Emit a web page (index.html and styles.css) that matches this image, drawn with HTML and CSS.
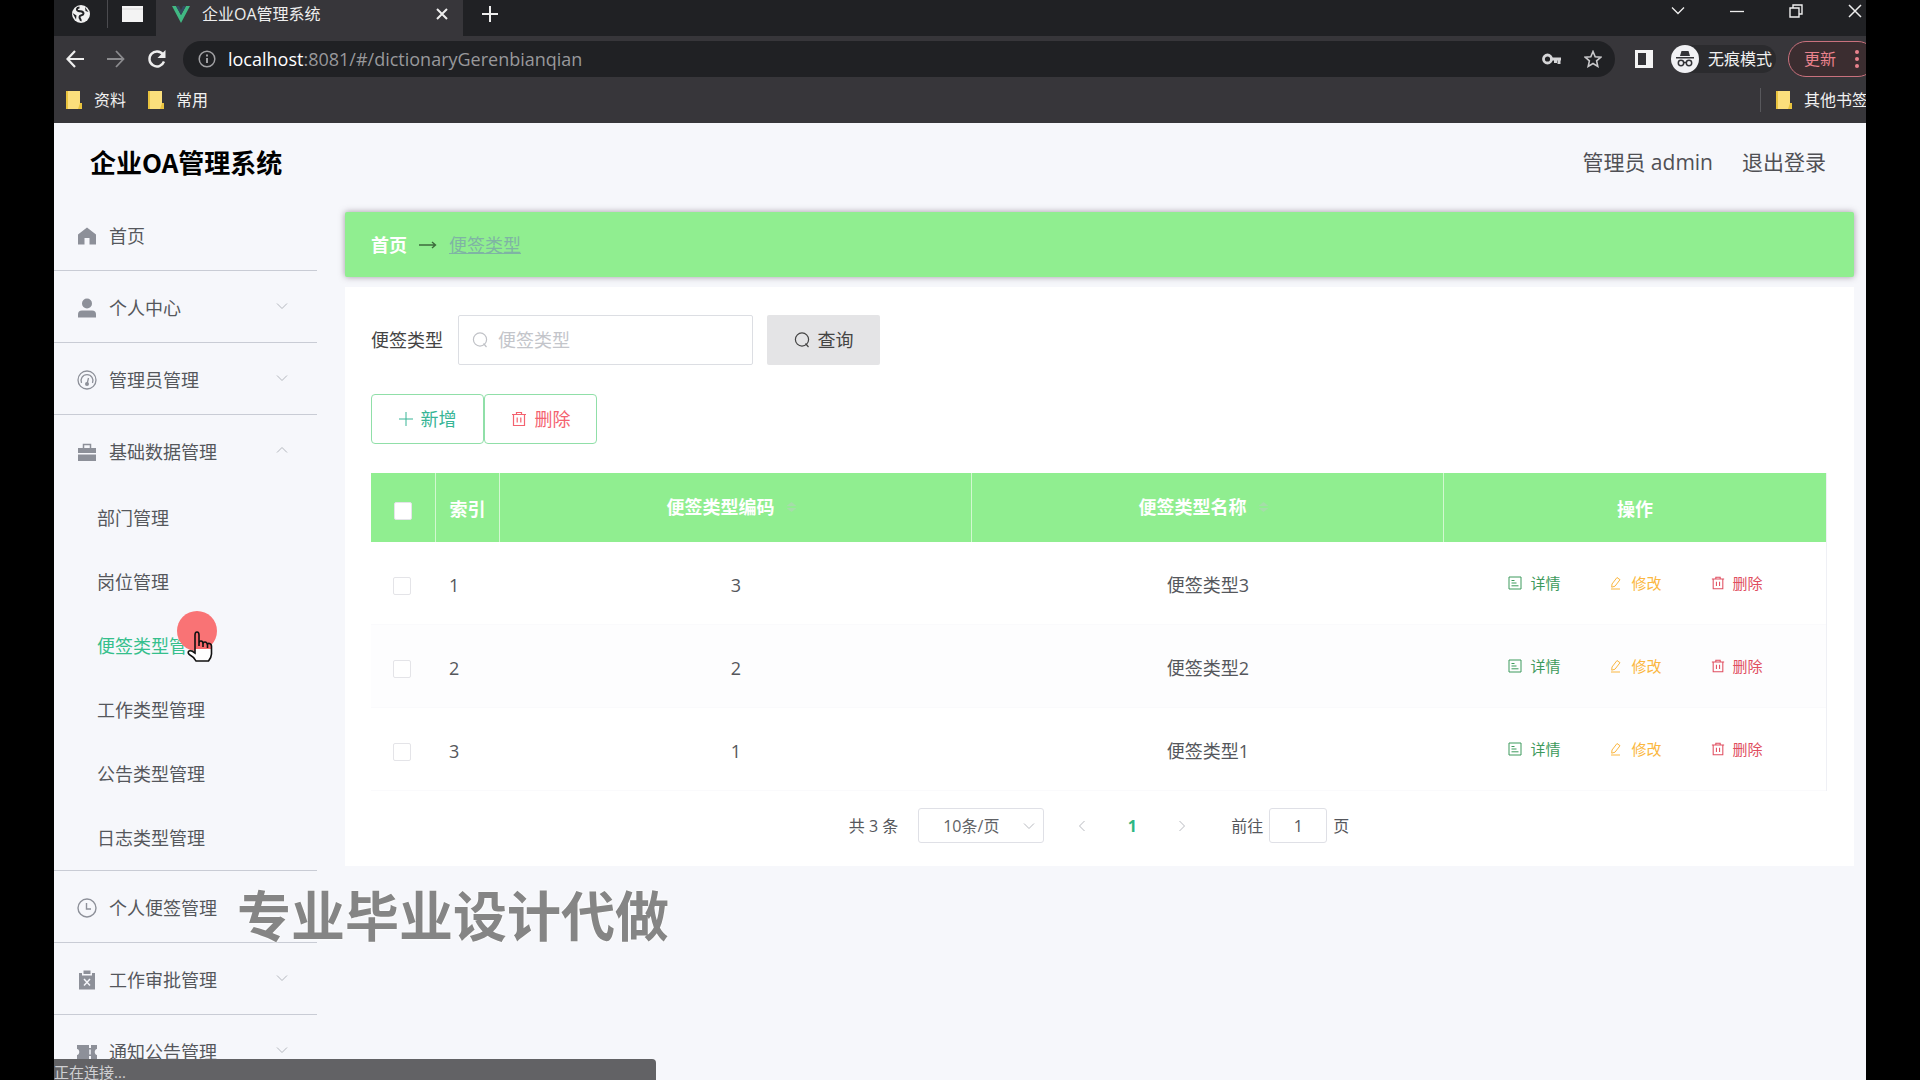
FILE: index.html
```html
<!DOCTYPE html>
<html lang="zh-CN">
<head>
<meta charset="utf-8">
<title>企业OA管理系统</title>
<link rel="stylesheet" href="styles.css">
</head>
<body>
<svg class="defs" aria-hidden="true">
  <symbol id="down" viewBox="0 0 14 14"><path d="M2 4.5l5 5 5-5" fill="none" stroke="currentColor"/></symbol>
  <symbol id="search" viewBox="0 0 16 16"><circle cx="8" cy="7.500" r="6.600" fill="none" stroke="currentColor" stroke-width="1.200"/><path d="M11.500 11.500l3 3.500" stroke="currentColor" stroke-width="1.200"/></symbol>
  <symbol id="trash" viewBox="0 0 16 16"><path d="M1 3.500h14M5.500 3.500v-2h5v2M2.500 3.500v11h11v-11M6.200 6.500v5M9.800 6.500v5" fill="none" stroke="currentColor" stroke-width="1.200"/></symbol>
  <symbol id="doc" viewBox="0 0 14 14"><path d="M1 1h12v12H1zM3.500 4.500h3M3.500 7h5M3.500 9.800h7" fill="none" stroke="currentColor"/></symbol>
  <symbol id="edit" viewBox="0 0 14 14"><path d="M3 8l5-6.500 3 2.200-5 6.500-3.300 1zM2 13h9" fill="none" stroke="currentColor"/></symbol>
  <symbol id="folder" viewBox="0 0 16 18"><path d="M1 0h13v12h2v6H1z" fill="#fbdf7c"/><path d="M0 0h2v18H0zM14 12h2v6h-4z" fill="#eac43f"/></symbol>
</svg>
<div class="window">
  <div class="tabs">
    <div class="pinned first"><svg width="20" height="20" viewBox="0 0 20 20"><circle cx="10" cy="10" r="9" fill="#f1f1f1"/><path d="M8.500 3.500c-3 0-3.500 3-1 3.500s5 0 5 2.500-4 1-4 3.500 2 2 1 4" fill="none" stroke="#222326" stroke-width="2"/><path d="M1.500 9l4 2.500-.5 4zM14 3l3.500 5-3-1z" fill="#222326"/></svg></div>
    <div class="pinned"><svg width="21" height="16" viewBox="0 0 21 16"><path d="M0 0h21v16H0z" fill="#f3f3f3"/><path d="M0 3h21" stroke="#d8d8d8"/></svg></div>
    <div class="tab"><svg width="18" height="17" viewBox="0 0 18 17"><path d="M0 0h4l5 9 5-9h4L9 17z" fill="#41b883"/><path d="M4 0h3l2 4 2-4h3L9 9z" fill="#35495e"/></svg><span>企业OA管理系统</span>
      <button class="icon close" aria-label="关闭标签页"><svg width="12" height="12" viewBox="0 0 12 12"><path d="M1 1l10 10M11 1L1 11" stroke="currentColor" stroke-width="2"/></svg></button></div>
    <button class="icon new" aria-label="新标签页"><svg width="16" height="16" viewBox="0 0 16 16"><path d="M8 0v16M0 8h16" stroke="currentColor" stroke-width="2"/></svg></button>
    <div class="controls">
      <button class="icon" aria-label="搜索标签页"><svg width="14" height="14" viewBox="0 0 14 14"><path d="M1 3.500l6 6 6-6" fill="none" stroke="currentColor" stroke-width="1.300"/></svg></button>
      <button class="icon" aria-label="最小化"><svg width="14" height="14" viewBox="0 0 14 14"><path d="M0 7.500h14" stroke="currentColor" stroke-width="1.300"/></svg></button>
      <button class="icon" aria-label="还原"><svg width="14" height="14" viewBox="0 0 14 14"><path d="M1 4h9v9H1zM4 4V1h9v9h-3" fill="none" stroke="currentColor" stroke-width="1.400"/></svg></button>
      <button class="icon" aria-label="关闭"><svg width="14" height="14" viewBox="0 0 14 14"><path d="M1 1l12 12M13 1L1 13" stroke="currentColor" stroke-width="1.500"/></svg></button>
    </div>
  </div>
  <div class="toolbar">
    <button class="icon nav" aria-label="后退"><svg width="18" height="18" viewBox="0 0 18 18"><path d="M18 9H2M9 1L1.500 9 9 17" fill="none" stroke="currentColor" stroke-width="2.200"/></svg></button>
    <button class="icon nav dim" aria-label="前进"><svg width="18" height="18" viewBox="0 0 18 18"><path d="M0 9h16M9 1l7.500 8L9 17" fill="none" stroke="currentColor" stroke-width="1.800"/></svg></button>
    <button class="icon nav" aria-label="重新加载"><svg width="20" height="20" viewBox="0 0 20 20"><path d="M17 12.500A7.500 7.500 0 1 1 16 5.500" fill="none" stroke="currentColor" stroke-width="2.400"/><path d="M18.500 1v8h-8z" fill="currentColor"/></svg></button>
    <div class="address">
      <svg width="18" height="18" viewBox="0 0 18 18"><circle cx="9" cy="9" r="7.800" fill="none" stroke="#a0a0a3" stroke-width="1.500"/><path d="M9 8v5M9 4.500v2" stroke="#a0a0a3" stroke-width="2"/></svg>
      <span class="url"><b>localhost</b>:8081/#/dictionaryGerenbianqian</span>
      <svg width="20" height="12" viewBox="0 0 20 12"><circle cx="5.500" cy="6" r="4" fill="none" stroke="#d5d5d7" stroke-width="2.800"/><path d="M9 6h10M17 6v5M13.500 6v4" stroke="#d5d5d7" stroke-width="3"/></svg>
      <svg class="star" width="18" height="18" viewBox="0 0 18 18"><path d="M9 1.500l2.200 5.200 5.600.5-4.200 3.700 1.200 5.500L9 13.500l-4.800 2.900 1.200-5.500L1.200 7.200l5.600-.5z" fill="none" stroke="#c9c9cb" stroke-width="1.600"/></svg>
    </div>
    <svg class="panel" width="18" height="18" viewBox="0 0 18 18"><path d="M0 0h18v18H0z" fill="#f4f4f4"/><path d="M3 3h8v12H3z" fill="#333337"/></svg>
    <div class="incognito"><svg width="28" height="28" viewBox="0 0 28 28"><circle cx="14" cy="14" r="14" fill="#f1f1f4"/><path d="M9 11l1.500-5h7l1.500 5zM5 12h18v1.500H5z" fill="#333337"/><g fill="none" stroke="#333337" stroke-width="1.500"><circle cx="10" cy="18" r="2.700"/><circle cx="18" cy="18" r="2.700"/><path d="M12.500 17.500h3"/></g></svg><span>无痕模式</span></div>
    <button class="update"><span>更新</span><svg width="4" height="18" viewBox="0 0 4 18"><g fill="currentColor"><circle cx="2" cy="2" r="2"/><circle cx="2" cy="9" r="2"/><circle cx="2" cy="16" r="2"/></g></svg></button>
  </div>
  <div class="bookmarks">
    <a href="#"><svg width="16" height="18"><use href="#folder"/></svg>资料</a>
    <a href="#"><svg width="16" height="18"><use href="#folder"/></svg>常用</a>
    <a href="#" class="other"><svg width="16" height="18"><use href="#folder"/></svg>其他书签</a>
  </div>
  <div class="page">
    <header class="header">
      <h1>企业OA管理系统</h1>
      <span>管理员 admin</span>
      <a href="#">退出登录</a>
    </header>
    <div class="body">
      <nav class="side">
        <ul>
          <li><a href="#" class="head"><svg width="20" height="20" viewBox="0 0 20 20"><path d="M10 1.500l9 7V18.500h-6.500V12h-5v6.500H1V8.500z" fill="currentColor"/></svg>首页</a></li>
          <li><a href="#" class="head"><svg width="20" height="20" viewBox="0 0 20 20"><circle cx="10" cy="5.500" r="5" fill="currentColor"/><path d="M1 19.500v-3q0-4 4-4h10q4 0 4 4v3z" fill="currentColor"/></svg>个人中心<svg class="chev" width="14" height="14"><use href="#down"/></svg></a></li>
          <li><a href="#" class="head"><svg width="20" height="20" viewBox="0 0 20 20"><g fill="none" stroke="currentColor" stroke-width="1.300"><circle cx="10" cy="10" r="9"/><path d="M4.500 13A6 6 0 1 1 15.500 13M10 14l1.500-6"/></g><circle cx="10" cy="14" r="2" fill="currentColor"/></svg>管理员管理<svg class="chev" width="14" height="14"><use href="#down"/></svg></a></li>
          <li><a href="#" class="head"><svg width="20" height="20" viewBox="0 0 20 20"><path d="M1 6h18v5H1zM1 12.500h18V19H1z" fill="currentColor"/><path d="M6.500 6V2.500h7V6" fill="none" stroke="currentColor" stroke-width="1.500"/></svg>基础数据管理<svg class="chev up" width="14" height="14"><use href="#down"/></svg></a>
            <ul class="sub">
              <li><a href="#">部门管理</a></li>
              <li><a href="#">岗位管理</a></li>
              <li><a href="#" class="active">便签类型管理</a></li>
              <li><a href="#">工作类型管理</a></li>
              <li><a href="#">公告类型管理</a></li>
              <li><a href="#">日志类型管理</a></li>
            </ul></li>
          <li><a href="#" class="head"><svg width="20" height="20" viewBox="0 0 20 20"><circle cx="10" cy="10" r="9" fill="none" stroke="currentColor" stroke-width="1.400"/><path d="M9.500 5v6H14" fill="none" stroke="currentColor" stroke-width="1.400"/></svg>个人便签管理</a></li>
          <li><a href="#" class="head"><svg width="20" height="20" viewBox="0 0 20 20"><path d="M2 3h3v2.500h10V3h3v16.500H2zM6.500.5h7v3.500h-7z" fill="currentColor"/><path d="M7 9l6 6.500M13 9l-6 6.500" stroke="#f5f6fb" stroke-width="1.500"/></svg>工作审批管理<svg class="chev" width="14" height="14"><use href="#down"/></svg></a></li>
          <li><a href="#" class="head"><svg width="20" height="20" viewBox="0 0 20 20"><path d="M0 3h12v3h2V3h6v4c-3 0-3 6 0 6v4h-6v-3h-2v3H0v-4c3 0 3-6 0-6z" fill="currentColor"/><path d="M13 7.500v5" stroke="#f5f6fb" stroke-width="1.500"/></svg>通知公告管理<svg class="chev" width="14" height="14"><use href="#down"/></svg></a></li>
        </ul>
      </nav>
      <main class="main">
        <div class="crumb"><b>首页</b><svg width="18" height="10" viewBox="0 0 18 10"><path d="M0 5h16M13 2l3.500 3-3.500 3" fill="none" stroke="#3c6b3c" stroke-width="1.400"/></svg><a href="#">便签类型</a></div>
        <section class="card">
          <form class="query">
            <label for="type">便签类型</label>
            <div class="field"><svg width="16" height="16"><use href="#search"/></svg><input id="type" type="text" placeholder="便签类型"></div>
            <button type="button" class="btn find"><svg width="16" height="16"><use href="#search"/></svg>查询</button>
          </form>
          <div class="ops">
            <button class="btn add"><svg width="14" height="14" viewBox="0 0 14 14"><path d="M7 0v14M0 7h14" stroke="currentColor"/></svg>新增</button>
            <button class="btn del"><svg width="16" height="16"><use href="#trash"/></svg>删除</button>
          </div>
          <table>
            <colgroup><col class="narrow"><col class="narrow"><col><col><col class="wide"></colgroup>
            <thead><tr>
              <th><input type="checkbox" aria-label="全选"></th><th>索引</th>
              <th class="sort"><span>便签类型编码</span></th><th class="sort"><span>便签类型名称</span></th><th>操作</th>
            </tr></thead>
            <tbody>
              <tr><td><input type="checkbox" aria-label="选择第1行"></td><td class="idx">1</td><td>3</td><td>便签类型3</td>
                <td><div class="acts"><a href="#" class="view"><svg width="14" height="14"><use href="#doc"/></svg>详情</a><a href="#" class="edit"><svg width="14" height="14"><use href="#edit"/></svg>修改</a><a href="#" class="rm"><svg width="14" height="14"><use href="#trash"/></svg>删除</a></div></td></tr>
              <tr><td><input type="checkbox" aria-label="选择第2行"></td><td class="idx">2</td><td>2</td><td>便签类型2</td>
                <td><div class="acts"><a href="#" class="view"><svg width="14" height="14"><use href="#doc"/></svg>详情</a><a href="#" class="edit"><svg width="14" height="14"><use href="#edit"/></svg>修改</a><a href="#" class="rm"><svg width="14" height="14"><use href="#trash"/></svg>删除</a></div></td></tr>
              <tr><td><input type="checkbox" aria-label="选择第3行"></td><td class="idx">3</td><td>1</td><td>便签类型1</td>
                <td><div class="acts"><a href="#" class="view"><svg width="14" height="14"><use href="#doc"/></svg>详情</a><a href="#" class="edit"><svg width="14" height="14"><use href="#edit"/></svg>修改</a><a href="#" class="rm"><svg width="14" height="14"><use href="#trash"/></svg>删除</a></div></td></tr>
            </tbody>
          </table>
          <div class="pager">
            <span>共 3 条</span>
            <div class="size"><select aria-label="每页条数"><option>10条/页</option></select><svg width="14" height="14"><use href="#down"/></svg></div>
            <button class="pg" aria-label="上一页"><svg class="left" width="14" height="14"><use href="#down"/></svg></button>
            <button class="pg now">1</button>
            <button class="pg" aria-label="下一页"><svg class="right" width="14" height="14"><use href="#down"/></svg></button>
            <label for="jump">前往</label><input id="jump" type="text" value="1"><span>页</span>
          </div>
        </section>
      </main>
    </div>
    <div class="watermark">专业毕业设计代做</div>
    <div class="spot"></div>
    <svg class="hand" width="26" height="32" viewBox="0 0 26 32"><path d="M8 20V4q0-3 2-3t2 3v8q0-2 2-2t2 3q0-2 2-2t2.500 3q0-2 2-1.500t2 3V23q0 3-3 7H9q-2-4-6-6-3-2-1-4 2-1 4 1z" fill="#fff"/><path d="M8 20V4q0-3 2-3t2 3v8q0-2 2-2t2 3q0-2 2-2t2.500 3q0-2 2-1.500t2 3V18H8z" fill="#f8696c"/><path d="M8 20V4q0-3 2-3t2 3v11V12q0-2 2-2t2 3v3-3q0-2 2-2t2.500 3v3-3q0-2 2-1.500t2 3V23q0 3-3 7H9q-2-4-6-6-3-2-1-4 2-1 6 2z" fill="none" stroke="#111" stroke-width="1.600"/></svg>
    <div class="status">正在连接...</div>
  </div>
</div>
</body>
</html>
```
FILE: styles.css
```css
* { box-sizing: border-box; }
body {
  margin: 0;
  padding: 0 54px;
  background: #000;
  color: #55575c;
  font: 18px/24px "Open Sans", "Noto Sans CJK SC", sans-serif;
}
.defs { display: none; }
svg { flex: none; }
a { color: inherit; text-decoration: none; }
button, input, select { font: inherit; color: inherit; }
button { padding: 0; border: 0; background: none; white-space: nowrap; }
ul { margin: 0; padding: 0; list-style: none; }

.window { display: flex; flex-direction: column; height: 100vh; overflow: hidden; background: #37363a; }

/* browser frame */
.tabs { display: flex; flex: none; height: 36px; background: #202124; color: #eee; font-size: 16px; overflow: hidden; }
.pinned { display: flex; align-items: center; justify-content: center; width: 48px; height: 28px; }
.pinned.first { width: 54px; border-right: 1px solid #4b4b4f; }
.tab { display: flex; align-items: center; gap: 12px; width: 307px; padding: 0 11px 8px 16px; background: #37363a; }
.icon { display: flex; align-items: center; justify-content: center; color: #eee; }
.close { width: 20px; height: 20px; margin-left: auto; }
.new { width: 54px; height: 28px; }
.controls { display: flex; margin: 0 -18px 0 auto; }
.controls .icon { width: 59px; height: 22px; }
.toolbar { display: flex; flex: none; align-items: center; height: 46px; color: #f1f1f1; font-size: 16px; }
.nav { width: 41px; height: 36px; }
.dim { color: #8b8b8e; }
.address { display: flex; flex: 1; align-items: center; height: 36px; margin-left: 6px; padding: 0 13px 0 15px; border-radius: 18px; background: #202124; }
.url { flex: 1; margin-left: 12px; font-size: 18px; color: #98989b; }
.url b { font-weight: 400; color: #fff; }
.star { margin-left: 22px; }
.panel { margin: 0 18px 0 20px; }
.incognito { display: flex; align-items: center; gap: 9px; padding-right: 4px; border-radius: 14px; background: #2b2b2e; white-space: nowrap; }
.update { display: flex; align-items: center; gap: 19px; height: 36px; margin: 0 -10px 0 12px; padding: 0 16px 0 15px; border: 1px solid #c9717d; border-radius: 18px; background: #3b2d30; color: #e9828d; }
.bookmarks { display: flex; flex: none; align-items: center; gap: 22px; height: 41px; padding: 0 0 5px 12px; color: #f1f1f1; font-size: 16px; white-space: nowrap; }
.bookmarks a { display: flex; align-items: center; gap: 12px; }
.bookmarks .other { margin: 0 -2px 0 auto; padding-left: 15px; border-left: 1px solid #58585c; }

/* application */
.page { position: relative; flex: 1; display: flex; flex-direction: column; min-height: 0; overflow: hidden; background: #f6f7fb; }
.header { display: flex; flex: none; align-items: center; height: 76px; padding: 2px 40px 0 36px; color: #505055; font-size: 21px; }
.header h1 { margin: 0 auto 0 0; font-size: 26px; line-height: 36px; color: #000; font-family: "Noto Sans CJK SC", sans-serif; }
.header a { margin-left: 29px; }
.body { display: grid; grid-template-columns: 263px 1fr; flex: 1; min-height: 0; }
.side > ul > li { border-bottom: 1px solid #c9ccd5; }
.head { display: flex; align-items: center; gap: 12px; height: 71px; padding: 3px 28px 0 23px; }
.head svg { color: #8d9099; }
.head .chev { margin: 0 0 4px auto; color: #b4b7be; }
.up { transform: rotate(180deg); }
.sub a { display: flex; align-items: center; height: 64px; padding-left: 43px; }
.sub .active { color: #35bf8c; }
.main { padding: 13px 12px 0 28px; }
.crumb { display: flex; align-items: center; gap: 12px; height: 65px; padding: 0 26px; border-radius: 2px; background: #90ee90; box-shadow: 0 0 6px rgba(80, 60, 80, .5); }
.crumb b { color: #fff; }
.crumb a { color: #7fb4a4; text-decoration: underline; }
.card { margin-top: 10px; padding: 28px 27px 23px 26px; background: #fff; }
.query { display: flex; align-items: center; color: #444; }
.field { display: flex; align-items: center; gap: 10px; width: 295px; height: 50px; margin: 0 14px 0 15px; padding: 0 13px; border: 1px solid #dcdee3; border-radius: 2px; color: #c0c2c7; }
.field input { flex: 1; min-width: 0; padding: 0; border: 0; outline: 0; background: none; }
.field input::placeholder { color: #c3c5ca; opacity: 1; }
.btn { display: flex; align-items: center; justify-content: center; gap: 8px; width: 113px; height: 50px; border: 1px solid #90dfa8; border-radius: 4px; background: #fff; }
.find { border: 0; border-radius: 2px; background: #e4e4e6; color: #444; }
.ops { display: flex; margin: 29px 0; }
.add { color: #38b596; }
.del { color: #f4626f; }
table { width: 100%; table-layout: fixed; border-collapse: separate; border-spacing: 0; border-right: 1px solid #eff0f5; text-align: center; }
.narrow { width: 64px; }
.wide { width: 383px; }
th { height: 69px; padding: 2px 0 0; background: #90ee90; color: #fff; }
th + th { border-left: 1px solid #d2f8d0; }
.sort span { display: inline-flex; align-items: center; gap: 12px; padding: 0 8px 3px 0; }
.sort span::after { content: ""; width: 10px; height: 10px; background: #a5dda9; clip-path: polygon(50% 0, 100% 40%, 0 40%, 0 60%, 100% 60%, 50% 100%, 0 60%, 0 40%); }
td { height: 83px; padding: 3px 0 0 2px; border-bottom: 1px solid #fafafc; }
td:first-child { padding: 2px 2px 0 0; }
tbody tr:nth-child(2) td { background: #fdfdfe; }
.idx { padding-left: 14px; text-align: left; }
input[type="checkbox"] { appearance: none; width: 18px; height: 18px; margin: 0; border: 1px solid #e4e4e8; border-radius: 2px; background: #fff; vertical-align: middle; }
.acts { display: flex; justify-content: center; gap: 49px; padding-bottom: 4px; font-size: 15px; }
.acts a { display: flex; align-items: center; gap: 8px; }
.view { color: #3d9a5c; }
.edit { color: #fbb740; }
.rm { color: #e04e60; }
.pager { display: flex; align-items: center; justify-content: center; height: 35px; margin-top: 17px; font-size: 16px; white-space: nowrap; }
.size { display: flex; align-items: center; width: 126px; height: 35px; margin: 0 13px 0 20px; padding: 0 7px 0 24px; border: 1px solid #dfe0e6; border-radius: 3px; color: #b8bac0; }
.size select { flex: 1; min-width: 0; padding: 0; appearance: none; border: 0; background: none; color: #606266; }
.pg { display: flex; align-items: center; justify-content: center; width: 50px; height: 35px; color: #b8bac0; }
.now { color: #2db784; font-weight: 700; }
.left { transform: rotate(90deg); }
.right { transform: rotate(-90deg); }
.pager label { margin-left: 24px; }
#jump { width: 58px; height: 35px; margin: 0 6px; padding: 0; border: 1px solid #dfe0e6; border-radius: 3px; background: #fff; text-align: center; }

/* overlays on top of the page */
.watermark { position: absolute; left: 183px; top: 755px; font: 700 54px/72px "Noto Sans CJK SC", sans-serif; color: #858585; text-shadow: 0 0 2px #fff, 0 0 3px #fff; white-space: nowrap; }
.spot { position: absolute; left: 123px; top: 488px; width: 40px; height: 40px; border-radius: 50%; background: #f97375; }
.hand { position: absolute; left: 133px; top: 508px; }
.status { position: absolute; left: 0; bottom: 0; width: 602px; height: 21px; border-radius: 0 4px 0 0; background: #626265; color: #d0d0d3; font-size: 15px; line-height: 27px; overflow: hidden; }
```
